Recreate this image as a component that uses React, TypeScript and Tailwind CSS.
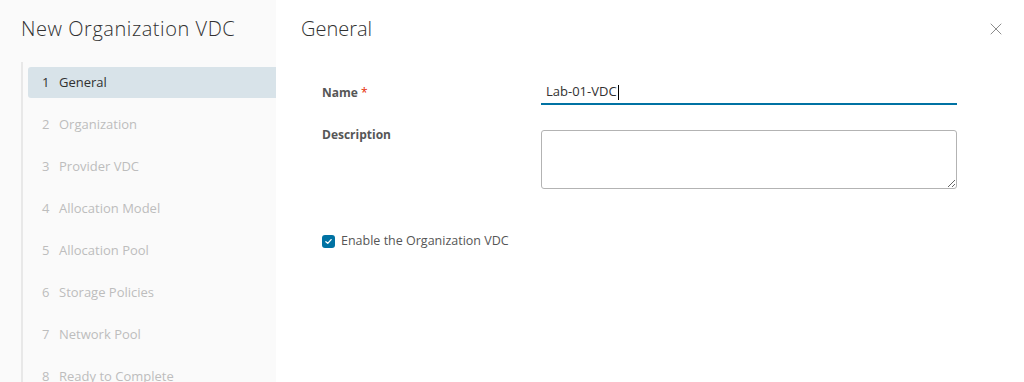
import { X } from "lucide-react";

const steps = [
  "General",
  "Organization",
  "Provider VDC",
  "Allocation Model",
  "Allocation Pool",
  "Storage Policies",
  "Network Pool",
  "Ready to Complete",
];

export default function App() {
  return (
    <div
      className="flex h-[382px] w-[1024px] overflow-hidden bg-white text-[#565656]"
      style={{ fontFamily: '"Open Sans", "Liberation Sans", sans-serif' }}
    >
      {/* Wizard sidebar */}
      <aside className="flex w-[276px] shrink-0 flex-col bg-[#fafafa]">
        <h1 className="pl-[21px] pt-[15px] text-[20px] font-light leading-[28px] tracking-[0.55px] text-[#313131]">
          New Organization VDC
        </h1>
        <nav className="ml-[21px] mt-[19px] flex flex-1 flex-col border-l-[2px] border-[#e8e8e8] pl-[5px] pt-[5px]">
          {steps.map((step, i) => (
            <div
              key={step}
              className={
                i === 0
                  ? "mb-[11px] flex h-[31px] items-center rounded-l-[3px] bg-[#d8e3e9] pl-[14px] text-[13px] text-[#313131]"
                  : "mb-[11px] flex h-[31px] items-center pl-[14px] text-[13px] text-[#bdbdbd]"
              }
            >
              <span className="w-[17px]">{i + 1}</span>
              <span>{step}</span>
            </div>
          ))}
        </nav>
      </aside>

      {/* Main content */}
      <main className="relative flex flex-1 flex-col pl-[25px] pr-[67px]">
        <div className="flex items-center justify-between pt-[15px]">
          <h2 className="text-[20px] font-light leading-[28px] text-[#313131]">
            General
          </h2>
          <button className="absolute right-[18px] top-[19px] text-[#8c8c8c]">
            <X className="h-[20px] w-[20px]" strokeWidth={1.2} />
          </button>
        </div>

        <div className="mt-[38px] flex flex-col pl-[21px]">
          <div className="flex items-center">
            <label className="w-[219px] text-[12px] font-bold">
              Name <span className="font-normal text-[#e62700]">*</span>
            </label>
            <div className="flex h-[24px] flex-1 items-center border-b-2 border-[#0072a3] pl-[5px] text-[13px] text-[#313131]">
              Lab-01-VDC<span className="ml-px h-[15px] w-px bg-black" />
            </div>
          </div>

          <div className="mt-[25px] flex items-start">
            <label className="-mt-[4px] w-[219px] text-[12px] font-bold">
              Description
            </label>
            <textarea className="h-[59px] flex-1 resize-y rounded-[3px] border border-[#b3b3b3] bg-white" />
          </div>

          <label className="mt-[43px] flex items-center gap-[6px] text-[12.5px]">
            <span className="flex h-[13px] w-[13px] items-center justify-center rounded-[3px] bg-[#0072a3]">
              <svg viewBox="0 0 12 12" className="h-[9px] w-[9px]">
                <path
                  d="M2.5 6.2 L5 8.5 L9.5 3.5"
                  fill="none"
                  stroke="white"
                  strokeWidth="1.8"
                  strokeLinecap="round"
                  strokeLinejoin="round"
                />
              </svg>
            </span>
            Enable the Organization VDC
          </label>
        </div>
      </main>
    </div>
  );
}
